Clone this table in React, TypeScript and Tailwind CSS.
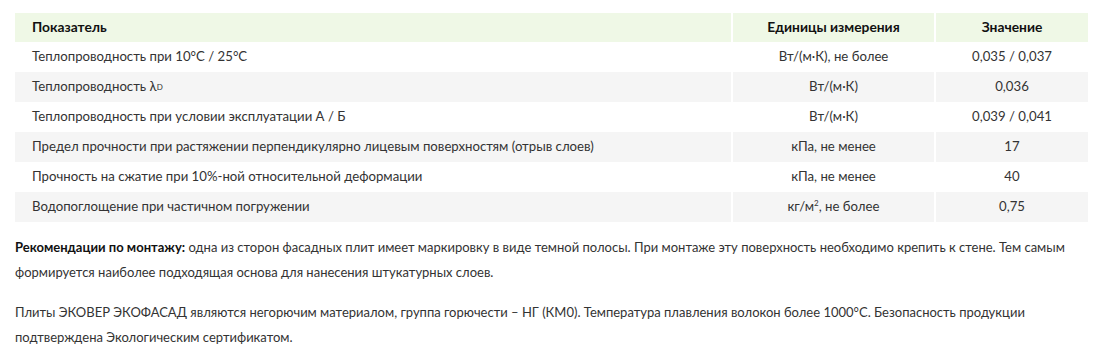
import React from "react";

const rows: [React.ReactNode, React.ReactNode, string][] = [
  ["Теплопроводность при 10°C / 25°C", "Вт/(м·К), не более", "0,035 / 0,037"],
  [
    <>
      Теплопроводность λ<span className="text-[8px] align-baseline">D</span>
    </>,
    "Вт/(м·К)",
    "0,036",
  ],
  ["Теплопроводность при условии эксплуатации А / Б", "Вт/(м·К)", "0,039 / 0,041"],
  [
    "Предел прочности при растяжении перпендикулярно лицевым поверхностям (отрыв слоев)",
    "кПа, не менее",
    "17",
  ],
  ["Прочность на сжатие при 10%-ной относительной деформации", "кПа, не менее", "40"],
  [
    "Водопоглощение при частичном погружении",
    <>
      кг/м<sup className="text-[8px]">2</sup>, не более
    </>,
    "0,75",
  ],
];

export default function App() {
  return (
    <div
      className="w-[1100px] h-[355px] bg-white px-[15px] pt-[13px] text-[#333333]"
      style={{ fontFamily: "Lato, 'Noto Sans', sans-serif" }}
    >
      <div className="grid grid-cols-[716px_201px_152px] gap-x-[2px] text-[13.2px]">
        <div className="bg-[#eff8e6] h-[29px] flex items-center pl-[17px] font-bold text-[13.8px] text-[#111]">Показатель</div>
        <div className="bg-[#eff8e6] h-[29px] flex items-center justify-center font-bold text-[13.8px] text-[#111]">Единицы измерения</div>
        <div className="bg-[#eff8e6] h-[29px] flex items-center justify-center font-bold text-[13.8px] text-[#111]">Значение</div>
        {rows.map((r, i) => {
          const bg = i % 2 === 1 ? "bg-[#f5f5f5]" : "bg-white";
          return (
            <React.Fragment key={i}>
              <div className={`${bg} h-[30px] flex items-center pl-[17px]`}>{r[0]}</div>
              <div className={`${bg} h-[30px] flex items-center justify-center`}>{r[1]}</div>
              <div className={`${bg} h-[30px] flex items-center justify-center`}>{r[2]}</div>
            </React.Fragment>
          );
        })}
      </div>
      <div className="mt-[13px] text-[13px] leading-[25px]">
        <p>
          <span className="whitespace-nowrap">
            <b className="text-[#111]">Рекомендации по монтажу:</b> одна из сторон фасадных плит имеет маркировку в
            виде темной полосы. При монтаже эту поверхность необходимо крепить к стене. Тем самым
          </span>
          <br />
          формируется наиболее подходящая основа для нанесения штукатурных слоев.
        </p>
        <p className="mt-[15px]">
          <span className="whitespace-nowrap">
            Плиты ЭКОВЕР ЭКОФАСАД являются негорючим материалом, группа горючести – НГ (КМ0). Температура плавления
            волокон более 1000°С. Безопасность продукции
          </span>
          <br />
          подтверждена Экологическим сертификатом.
        </p>
      </div>
    </div>
  );
}
